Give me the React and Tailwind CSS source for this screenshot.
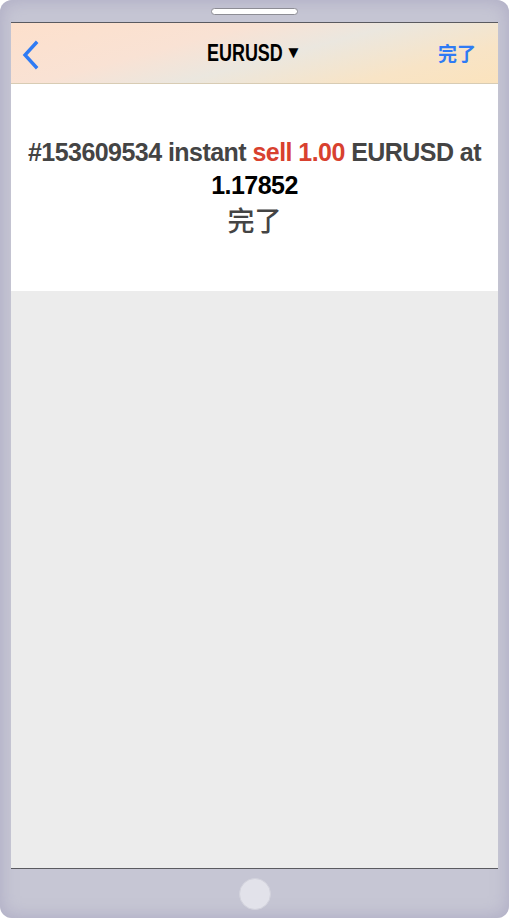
import React from 'react'

const BackIcon = () => (
  <svg width="20" height="30" viewBox="0 0 20 30" fill="none">
    <path d="M15 3 L4 15 L15 27" stroke="#2f7bf4" strokeWidth="3.4" strokeLinecap="square" />
  </svg>
)

const App = () => {
  return (
    <div className="w-[510px] h-[919px] bg-white">
      <div className="w-[509px] h-[918px] rounded-[12px] bg-[#c6c6d4] shadow-[inset_0_0_18px_rgba(165,162,190,0.8)] flex flex-col px-[11px]">
        <div className="h-[22px] flex items-start justify-center pt-[8px]">
          <div className="w-[87px] h-[7px] rounded-full bg-white border border-[#8d8d95]"></div>
        </div>

        <div className="flex-1 flex flex-col border-t-[1px] border-b-[1px] border-[#5a5a60]">
          <div className="h-[61px] flex items-center justify-between px-[10px] border-b border-[#d8ccb4] bg-[linear-gradient(165deg,#fde0cc_0%,#f9e2d4_35%,#ebe7df_55%,#f8e4c6_80%,#fbe3bd_100%)]">
            <div className="w-[60px] flex items-center pt-[3px]">
              <BackIcon />
            </div>
            <div className="flex items-center font-['Liberation_Sans',sans-serif] font-bold text-[23px] text-black">
              <span className="inline-block w-[76px] scale-x-[0.78] origin-left whitespace-nowrap">EURUSD</span>
              <span className="text-[17px] ml-[2px]">▼</span>
            </div>
            <div className="w-[60px] flex justify-end pr-[12px] font-['Noto_Sans_CJK_SC',sans-serif] font-bold text-[19px] text-[#2f7bf4]">
              完了
            </div>
          </div>

          <div className="bg-white pt-[52px] pb-[54px] px-3 text-center font-['Liberation_Sans','Noto_Sans_CJK_SC',sans-serif] font-bold text-[25px] leading-[33px] tracking-[-0.55px] text-[#444444]">
            <p>
              #153609534 instant <span className="text-[#d8412f]">sell 1.00</span> EURUSD at <span className="text-black">1.17852</span>
            </p>
            <p className="font-['Noto_Sans_CJK_SC',sans-serif] font-medium tracking-normal text-[27px] leading-[35px]">完了</p>
          </div>

          <div className="flex-1 bg-[#ececec]"></div>
        </div>

        <div className="h-[49px] flex items-center justify-center">
          <div className="w-[32px] h-[32px] rounded-full bg-[#e2e2ea] border border-[#d2d2dc]"></div>
        </div>
      </div>
    </div>
  )
}

export default App
